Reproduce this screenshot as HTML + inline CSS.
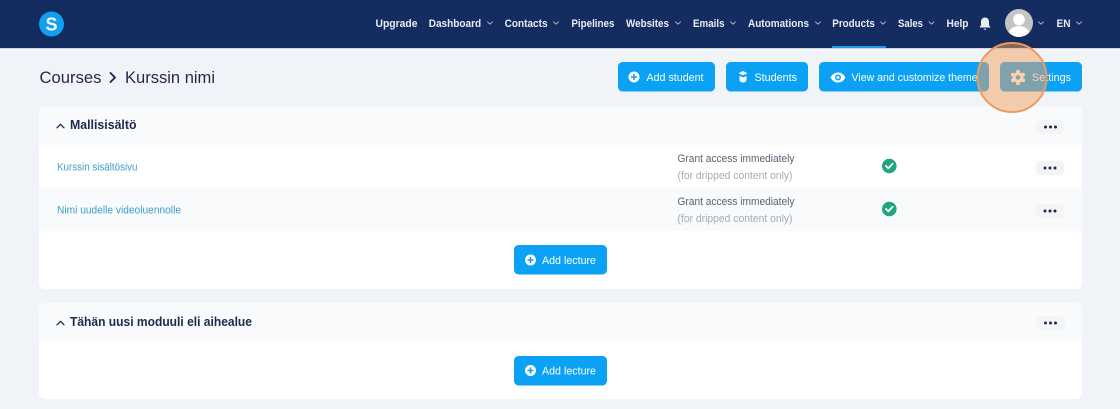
<!DOCTYPE html>
<html lang="en">
<head>
<meta charset="utf-8">
<title>Courses</title>
<style>
html,body{margin:0;padding:0;width:1120px;height:409px;overflow:hidden;background:#f0f4f9}
svg{display:block}
text{font-family:"Liberation Sans",sans-serif}
.n{font-size:10.8px;font-weight:700;fill:#e9edf5}
.b{font-size:11px;fill:#fff}
.c{fill:none;stroke:#b9c3d8;stroke-width:.9;stroke-linecap:round;stroke-linejoin:round}
.g{font-size:11px;fill:#5b6270}
.s{font-size:11px;fill:#a5abb5}
.l{font-size:11px;fill:#3f9fc9}
.h{font-size:12.5px;font-weight:700;fill:#1d2a4a}
</style>
</head>
<body>
<svg width="1120" height="409" viewBox="0 0 1120 409" xmlns="http://www.w3.org/2000/svg">
<defs>
<g id="ch"><path class="c" d="M-2.500 -1.200L0 1.200L2.500 -1.200"/></g>
<g id="plus"><circle r="5.500" fill="#fff"/><path d="M-3 0H3M0 -3V3" stroke="#0ba2f6" stroke-width="1.600"/></g>
<g id="dots"><rect x="-14.500" y="-7" width="29" height="14" rx="6" fill="#f3f4f6"/><circle cx="-5" r="1.500" fill="#1d2a4a"/><circle r="1.500" fill="#1d2a4a"/><circle cx="5" r="1.500" fill="#1d2a4a"/></g>
<g id="ok"><circle r="7.300" fill="#1fa67f"/><path d="M-3.300 0L-1 2.300L3.300 -2.200" fill="none" stroke="#fff" stroke-width="1.800" stroke-linecap="round" stroke-linejoin="round"/></g>
<clipPath id="av"><circle cx="1019" cy="23" r="14"/></clipPath>
</defs>

<rect width="1120" height="409" fill="#f0f4f9"/>
<rect width="1120" height="48" fill="#152c61"/>
<rect y="48" width="1120" height="1" fill="#cfd6e2"/>
<rect x="832" y="46" width="54" height="2" fill="#1f9be0"/>

<circle cx="51.500" cy="24" r="12.500" fill="#129ff0"/>
<text x="51.500" y="30.500" text-anchor="middle" style="font-size:18px;font-weight:700" fill="#fff">S</text>

<text class="n" x="375.500" y="27" textLength="42" lengthAdjust="spacingAndGlyphs">Upgrade</text>
<text class="n" x="428.700" y="27" textLength="52.500" lengthAdjust="spacingAndGlyphs">Dashboard</text>
<use href="#ch" x="490" y="23"/>
<text class="n" x="504.600" y="27" textLength="43" lengthAdjust="spacingAndGlyphs">Contacts</text>
<use href="#ch" x="556" y="23"/>
<text class="n" x="571.400" y="27" textLength="43" lengthAdjust="spacingAndGlyphs">Pipelines</text>
<text class="n" x="626" y="27" textLength="43" lengthAdjust="spacingAndGlyphs">Websites</text>
<use href="#ch" x="678" y="23"/>
<text class="n" x="693" y="27" textLength="31.500" lengthAdjust="spacingAndGlyphs">Emails</text>
<use href="#ch" x="733" y="23"/>
<text class="n" x="748" y="27" textLength="61" lengthAdjust="spacingAndGlyphs">Automations</text>
<use href="#ch" x="818" y="23"/>
<text class="n" x="832.300" y="27" textLength="42.500" lengthAdjust="spacingAndGlyphs">Products</text>
<use href="#ch" x="883" y="23"/>
<text class="n" x="898" y="27" textLength="25" lengthAdjust="spacingAndGlyphs">Sales</text>
<use href="#ch" x="931.500" y="23"/>
<text class="n" x="946.500" y="27" textLength="22" lengthAdjust="spacingAndGlyphs">Help</text>

<path d="M985 17.500c-2.700 0-4 2-4 4.500v3l-1.500 2.500h11L989 25v-3c0-2.500-1.300-4.500-4-4.500z" fill="#e8ecf3"/>
<path d="M983.500 28.800a1.600 1.600 0 0 0 3 0z" fill="#e8ecf3"/>

<circle cx="1019" cy="23" r="14" fill="#c4c4c4"/>
<g clip-path="url(#av)">
<circle cx="1019" cy="19.500" r="5.800" fill="#fff"/>
<ellipse cx="1019" cy="34" rx="10.500" ry="8" fill="#fff"/>
</g>
<use href="#ch" x="1041" y="23"/>
<text class="n" x="1056.500" y="27" textLength="14" lengthAdjust="spacingAndGlyphs">EN</text>
<use href="#ch" x="1079" y="23"/>

<text x="39.500" y="83" style="font-size:16.500px" fill="#1e2a45" textLength="62" lengthAdjust="spacingAndGlyphs">Courses</text>
<path d="M110.500 73L115 77.500L110.500 82" fill="none" stroke="#1e2a45" stroke-width="1.900" stroke-linecap="round" stroke-linejoin="round"/>
<text x="125" y="83" style="font-size:16.500px" fill="#1e2a45" textLength="90" lengthAdjust="spacingAndGlyphs">Kurssin nimi</text>

<rect x="618" y="62" width="97" height="29.500" rx="4.500" fill="#0ba2f6"/>
<use href="#plus" x="634" y="77"/>
<text class="b" x="646.500" y="81" textLength="57" lengthAdjust="spacingAndGlyphs">Add student</text>

<rect x="726" y="62" width="82" height="29.500" rx="4.500" fill="#0ba2f6"/>
<path d="M738.500 73.200l4.500-2.200 4.500 2.200-4.500 2.200z" fill="#fff"/>
<path d="M739.500 76l3.500 1.500 3.500-1.500v3.500c0 1.500-1.500 3-3.500 3s-3.500-1.500-3.500-3z" fill="#fff"/>
<text class="b" x="754.500" y="81" textLength="42.500" lengthAdjust="spacingAndGlyphs">Students</text>

<rect x="819" y="62" width="170" height="29.500" rx="4.500" fill="#0ba2f6"/>
<path d="M830.500 77.500c2-3.500 4.700-5 7.500-5s5.500 1.500 7.500 5c-2 3.500-4.700 5-7.500 5s-5.500-1.500-7.500-5z" fill="#fff"/>
<circle cx="838" cy="77.500" r="3" fill="#0ba2f6"/>
<circle cx="838" cy="77.500" r="1.500" fill="#fff"/>
<text class="b" x="851.500" y="81" textLength="126" lengthAdjust="spacingAndGlyphs">View and customize theme</text>

<rect x="1000" y="62" width="82" height="29.500" rx="4.500" fill="#0ba2f6"/>
<g fill="#fff">
<circle cx="1018" cy="77.500" r="5.300"/>
<circle cx="1018" cy="71.800" r="2"/>
<circle cx="1018" cy="83.200" r="2"/>
<circle cx="1013" cy="74.700" r="2"/>
<circle cx="1023" cy="74.700" r="2"/>
<circle cx="1013" cy="80.300" r="2"/>
<circle cx="1023" cy="80.300" r="2"/>
</g>
<circle cx="1018" cy="77.500" r="2.200" fill="#0ba2f6"/>
<text class="b" x="1032" y="81" textLength="39" lengthAdjust="spacingAndGlyphs">Settings</text>

<!-- card 1 -->
<rect x="39" y="106" width="1043" height="183" rx="6" fill="#fff"/>
<path d="M39 145V112a6 6 0 0 1 6-6H1076a6 6 0 0 1 6 6V145z" fill="#f8fafc"/>
<rect x="39" y="188" width="1043" height="43" fill="#f8fafc"/>
<path d="M57 127.800L60.500 124.300L64 127.800" fill="none" stroke="#1d2a4a" stroke-width="1.300" stroke-linecap="round" stroke-linejoin="round"/>
<text class="h" x="70" y="129" textLength="66.500" lengthAdjust="spacingAndGlyphs">Mallisisältö</text>
<use href="#dots" x="1050.500" y="127"/>

<text class="l" x="57" y="170.500" textLength="80.500" lengthAdjust="spacingAndGlyphs">Kurssin sisältösivu</text>
<text class="g" x="677.500" y="162" textLength="117" lengthAdjust="spacingAndGlyphs">Grant access immediately</text>
<text class="s" x="677.500" y="179" textLength="115" lengthAdjust="spacingAndGlyphs">(for dripped content only)</text>
<use href="#ok" x="889.300" y="166"/>
<use href="#dots" x="1050" y="168"/>

<text class="l" x="57" y="213.500" textLength="124" lengthAdjust="spacingAndGlyphs">Nimi uudelle videoluennolle</text>
<text class="g" x="677.500" y="205" textLength="117" lengthAdjust="spacingAndGlyphs">Grant access immediately</text>
<text class="s" x="677.500" y="222" textLength="115" lengthAdjust="spacingAndGlyphs">(for dripped content only)</text>
<use href="#ok" x="889.300" y="209"/>
<use href="#dots" x="1050" y="211"/>

<rect x="514" y="245" width="93" height="29.500" rx="4.500" fill="#0ba2f6"/>
<use href="#plus" x="530.500" y="260"/>
<text class="b" x="542" y="264" textLength="54" lengthAdjust="spacingAndGlyphs">Add lecture</text>

<!-- card 2 -->
<rect x="39" y="303" width="1043" height="96" rx="6" fill="#fff"/>
<path d="M39 341V309a6 6 0 0 1 6-6H1076a6 6 0 0 1 6 6V341z" fill="#f8fafc"/>
<path d="M57 324.800L60.500 321.300L64 324.800" fill="none" stroke="#1d2a4a" stroke-width="1.300" stroke-linecap="round" stroke-linejoin="round"/>
<text class="h" x="70" y="326" textLength="182" lengthAdjust="spacingAndGlyphs">Tähän uusi moduuli eli aihealue</text>
<use href="#dots" x="1050.500" y="323"/>

<rect x="514" y="356" width="93" height="29.500" rx="4.500" fill="#0ba2f6"/>
<use href="#plus" x="530.500" y="370.500"/>
<text class="b" x="542" y="374.500" textLength="54" lengthAdjust="spacingAndGlyphs">Add lecture</text>

<!-- highlight -->
<circle cx="1012" cy="77.500" r="34.500" fill="#f4a261" fill-opacity=".5" stroke="#ec9b5c" stroke-width="2"/>
</svg>
</body>
</html>
